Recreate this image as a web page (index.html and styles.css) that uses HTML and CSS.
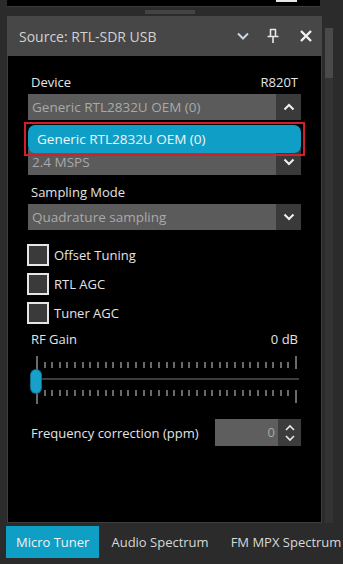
FILE: index.html
```html
<!DOCTYPE html>
<html lang="en">
<head>
  <meta charset="UTF-8">
  <title>Source: RTL-SDR USB</title>
  <link rel="stylesheet" href="styles.css">
</head>
<body>

  <div class="top-strip"><span class="top-mark"></span></div>
  <div class="grip"><span></span></div>

  <div class="layout">
    <div class="panel">
      <div class="panel-head">
        <span class="panel-title">Source: RTL-SDR USB</span>
        <svg class="head-icon icon-menu" width="14" height="14" viewBox="0 0 14 14"><path d="M2 4.5 L7 9.5 L12 4.5" fill="none" stroke="#c9d7e6" stroke-width="2"/></svg>
        <svg class="head-icon icon-pin" width="14" height="16" viewBox="0 0 14 16"><path d="M4 1.5 H10 M4.5 1.5 V8 M9.5 1.5 V8 M1.5 8.5 H12.5 M7 8.5 V15" fill="none" stroke="#e8e8e8" stroke-width="1.6"/></svg>
        <svg class="head-icon icon-close" width="14" height="14" viewBox="0 0 14 14"><path d="M2 2 L12 12 M12 2 L2 12" fill="none" stroke="#f2f2f2" stroke-width="2.4"/></svg>
      </div>

      <div class="panel-body">
        <div class="field">
          <div class="label-row"><span>Device</span><span>R820T</span></div>
          <div class="combo">
            <span class="combo-text">Generic RTL2832U OEM (0)</span>
            <span class="combo-btn"><svg width="12" height="8" viewBox="0 0 12 8"><path d="M1.5 6.5 L6 2 L10.5 6.5" fill="none" stroke="#f0f0f0" stroke-width="2"/></svg></span>
          </div>
        </div>

        <div class="field">
          <!-- sample rate label sits under the open dropdown -->
          <div class="label-row"></div>
          <div class="combo">
            <span class="combo-text">2.4 MSPS</span>
            <span class="combo-btn"><svg width="12" height="8" viewBox="0 0 12 8"><path d="M1.5 1.5 L6 6 L10.5 1.5" fill="none" stroke="#f0f0f0" stroke-width="2"/></svg></span>
          </div>
        </div>

        <div class="field">
          <div class="label-row"><span>Sampling Mode</span></div>
          <div class="combo">
            <span class="combo-text">Quadrature sampling</span>
            <span class="combo-btn"><svg width="12" height="8" viewBox="0 0 12 8"><path d="M1.5 1.5 L6 6 L10.5 1.5" fill="none" stroke="#f0f0f0" stroke-width="2"/></svg></span>
          </div>
        </div>

        <div class="checks">
          <label class="check"><span class="box"></span>Offset Tuning</label>
          <label class="check"><span class="box"></span>RTL AGC</label>
          <label class="check"><span class="box"></span>Tuner AGC</label>
        </div>

        <div class="label-row gain-row"><span>RF Gain</span><span>0 dB</span></div>
        <div class="slider">
          <svg id="ticks" width="274" height="54" viewBox="0 0 274 54"></svg>
          <span class="thumb"></span>
        </div>

        <div class="ppm-row">
          <span>Frequency correction (ppm)</span>
          <div class="spin">
            <span class="spin-val">0</span>
            <span class="spin-btns">
              <svg width="12" height="22" viewBox="0 0 12 22"><path d="M2 8 L6 4 L10 8 M2 14 L6 18 L10 14" fill="none" stroke="#e8e8e8" stroke-width="1.6"/></svg>
            </span>
          </div>
        </div>

        <div class="popup">
          <div class="popup-item">Generic RTL2832U OEM (0)</div>
        </div>
      </div>
    </div>

    <div class="side">
      <span class="side-track"><span class="side-thumb"></span></span>
    </div>
  </div>

  <div class="tabs">
    <span class="tab active">Micro Tuner</span>
    <span class="tab">Audio Spectrum</span>
    <span class="tab">FM MPX Spectrum</span>
  </div>

  <script>
    // draw slider tick marks
    const svg = document.getElementById("ticks");
    const left = 8, right = 267, steps = 34;
    let marks = '';
    marks += `<rect x="${left}" y="3" width="2" height="48" fill="#6a6a6a"/>`;
    marks += `<rect x="${right}" y="3" width="2" height="13" fill="#6a6a6a"/>`;
    marks += `<rect x="${right}" y="37" width="2" height="13" fill="#6a6a6a"/>`;
    for (let i = 1; i < steps; i++) {
      const x = Math.round(left + (right - left) * i / steps);
      marks += `<rect x="${x}" y="9" width="2" height="6" fill="#6a6a6a"/>`;
      marks += `<rect x="${x}" y="37" width="2" height="6" fill="#6a6a6a"/>`;
    }
    marks += `<rect x="${left}" y="25" width="${right - left + 4}" height="2" fill="#3c3c3c"/>`;
    svg.innerHTML = marks;
  </script>
</body>
</html>
```

FILE: styles.css
```css
body {
  margin: 0;
  width: 343px;
  height: 564px;
  overflow: hidden;
  background-color: #2b2b2b;
  font-family: "Open Sans", "Noto Sans", sans-serif;
  font-size: 13px;
  color: #e4e4e4;
}
.top-strip {
  margin-left: 7px;
  width: 313px;
  height: 6px;
  background-color: #000;
  border-bottom: 1px solid #3a3a3a;
  display: flex;
}
.top-mark {
  margin-left: 269px;
  width: 21px;
  height: 2px;
  background-color: #e8e8e8;
}
.grip {
  height: 9px;
  display: flex;
  justify-content: center;
  align-items: center;
  padding-right: 4px;
}
.grip span {
  width: 50px;
  height: 4px;
  background-color: #444;
}
.layout {
  display: flex;
  height: 507px;
}
.panel {
  margin-left: 7px;
  width: 315px;
  display: flex;
  flex-direction: column;
}
.panel-head {
  height: 40px;
  background-color: #474747;
  display: flex;
  align-items: center;
  padding-left: 12px;
  padding-right: 9px;
}
.panel-title {
  flex: 1;
  font-size: 14px;
  color: #d2d2d2;
}
.icon-pin {
  margin-left: 16px;
}
.icon-close {
  margin-left: 19px;
}
.panel-body {
  position: relative;
  flex: 1;
  background-color: #000;
  border: 1px solid #3e3e3e;
  border-top: none;
  padding: 17px 20px 0 20px;
}
.field {
  margin-bottom: 8px;
}
.label-row {
  height: 18px;
  line-height: 18px;
  display: flex;
  justify-content: space-between;
  padding: 0 3px;
  margin-bottom: 3px;
}
.combo {
  height: 26px;
  background-color: #5b5b5b;
  display: flex;
  align-items: center;
}
.combo-text {
  flex: 1;
  padding-left: 4px;
  color: #a9a9a9;
  font-size: 13.5px;
}
.combo-btn {
  width: 25px;
  height: 26px;
  background-color: #3a3a3a;
  display: flex;
  align-items: center;
  justify-content: center;
}
.checks {
  margin-top: 14px;
  display: flex;
  flex-direction: column;
  gap: 7px;
}
.check {
  height: 22px;
  display: flex;
  align-items: center;
  gap: 5px;
  margin-left: -1px;
}
.box {
  width: 18px;
  height: 18px;
  border: 2px solid #e6e6e6;
  background-color: #3a3a3a;
}
.gain-row {
  margin-top: 6px;
  margin-bottom: 5px;
}
.slider {
  position: relative;
  height: 54px;
}
.thumb {
  position: absolute;
  left: 3px;
  top: 17px;
  width: 10px;
  height: 23px;
  border-radius: 5px;
  background-color: #17a0c9;
  box-shadow: 0 0 0 1px #0e6f8c;
}
.ppm-row {
  margin-top: 12px;
  display: flex;
  align-items: center;
  justify-content: space-between;
  padding-left: 3px;
}
.spin {
  width: 86px;
  height: 27px;
  display: flex;
  background-color: #5e5e5e;
}
.spin-val {
  flex: 1;
  text-align: right;
  line-height: 27px;
  padding-right: 3px;
  color: #a9a9a9;
}
.spin-btns {
  width: 23px;
  background-color: #3c3c3c;
  display: flex;
  align-items: center;
  justify-content: center;
}
.popup {
  position: absolute;
  left: 16px;
  top: 66px;
  width: 273px;
  height: 30px;
  border: 2px solid #d0202a;
  padding: 0 2px;
  display: flex;
  align-items: center;
}
.popup-item {
  flex: 1;
  height: 28px;
  line-height: 28px;
  border-radius: 7px;
  background-color: #0f9fc6;
  color: #f4f4f4;
  padding-left: 9px;
  font-size: 13.5px;
}
.side {
  width: 21px;
  display: flex;
}
.side-track {
  margin-left: 3px;
  margin-top: 12px;
  width: 8px;
  background-color: #333;
  display: flex;
  flex-direction: column;
}
.side-thumb {
  height: 50px;
  background-color: #4a4a4a;
}
.tabs {
  margin-top: 3px;
  margin-left: 6px;
  height: 32px;
  display: flex;
  white-space: nowrap;
}
.tab {
  padding: 0 10px;
  line-height: 32px;
  font-size: 13px;
  color: #d8d8d8;
  margin-right: 2px;
}
.tab.active {
  background-color: #0f9ec4;
  color: #f2f2f2;
}
```
